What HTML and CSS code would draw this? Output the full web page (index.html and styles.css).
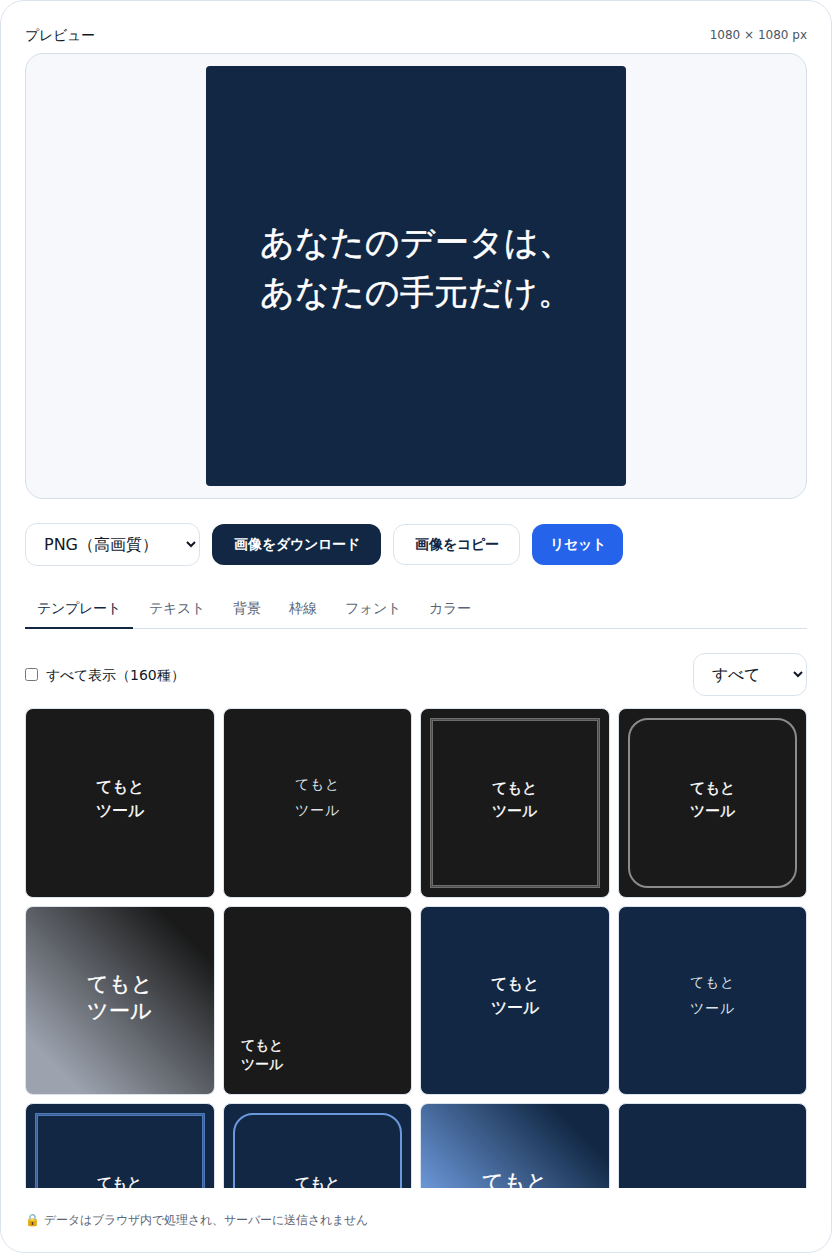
FILE: index.html
```html
<!DOCTYPE html>
<html>
<head>
<meta charset="utf-8">
<title>プレビュー</title>
<link rel="stylesheet" href="styles.css">
</head>
<body>
<main class="card">
  <div class="preview-head">
    <span class="preview-label">プレビュー</span>
    <span class="preview-size">1080 × 1080 px</span>
  </div>
  <div class="preview-box">
    <div class="canvas"><p>あなたのデータは、<br>あなたの手元だけ。</p></div>
  </div>
  <div class="controls">
    <select class="select format"><option>PNG（高画質）</option></select>
    <button class="btn btn-navy">画像をダウンロード</button>
    <button class="btn btn-white">画像をコピー</button>
    <button class="btn btn-blue">リセット</button>
  </div>
  <nav class="tabs">
    <a class="tab active">テンプレート</a>
    <a class="tab">テキスト</a>
    <a class="tab">背景</a>
    <a class="tab">枠線</a>
    <a class="tab">フォント</a>
    <a class="tab">カラー</a>
  </nav>
  <div class="filter">
    <label class="show-all"><input type="checkbox"><span>すべて表示（160種）</span></label>
    <select class="select category"><option>すべて</option></select>
  </div>
  <div class="grid-wrap">
    <div class="grid">
      <div class="tile dark t-bold"><p>てもと<br>ツール</p></div>
      <div class="tile dark t-thin"><p>てもと<br>ツール</p></div>
      <div class="tile dark t-framed double-gray"><p>てもと<br>ツール</p></div>
      <div class="tile dark t-framed round-gray"><p>てもと<br>ツール</p></div>
      <div class="tile grad-gray t-large"><p>てもと<br>ツール</p></div>
      <div class="tile dark t-corner"><p>てもと<br>ツール</p></div>
      <div class="tile navy t-bold"><p>てもと<br>ツール</p></div>
      <div class="tile navy t-thin"><p>てもと<br>ツール</p></div>
      <div class="tile navy t-framed double-blue"><p>てもと<br>ツール</p></div>
      <div class="tile navy t-framed round-blue"><p>てもと<br>ツール</p></div>
      <div class="tile grad-blue t-large"><p>てもと<br>ツール</p></div>
      <div class="tile navy t-corner"><p>てもと<br>ツール</p></div>
    </div>
  </div>
  <footer class="note">🔒 データはブラウザ内で処理され、サーバーに送信されません</footer>
</main>
</body>
</html>
```

FILE: styles.css
```css
* { box-sizing: border-box; }
html, body { margin: 0; height: 100%; }
body {
  background: #ffffff;
  color: #111827;
  font-family: "DejaVu Sans", sans-serif;
  overflow: hidden;
}
.card {
  height: 1253px;
  display: flex;
  flex-direction: column;
  padding: 24px 24px 0;
  background: #fff;
  border: 1px solid #dbe3ee;
  border-radius: 24px;
}
.preview-head {
  display: flex;
  justify-content: space-between;
  align-items: center;
  height: 20px;
  margin-bottom: 8px;
}
.preview-label { font-size: 14px; padding-top: 2px; }
.preview-size { font-size: 12px; color: #4b5563; }
.preview-box {
  height: 446px;
  padding: 12px;
  background: #f6f8fc;
  border: 1px solid #d5deea;
  border-radius: 18px;
  display: flex;
  justify-content: center;
  flex: none;
}
.canvas {
  width: 420px;
  height: 420px;
  background: #112743;
  border-radius: 4px;
  color: #fff;
  display: flex;
  align-items: center;
  padding: 0 0 16px 54px;
}
.canvas p { margin: 0; font-size: 33.6px; line-height: 50.4px; -webkit-text-stroke: 0.5px #fff; }
.controls {
  display: flex;
  align-items: center;
  gap: 12px;
  margin-top: 24px;
}
.select {
  height: 43px;
  padding: 0 14px;
  font-family: inherit;
  font-size: 16px;
  color: #111827;
  background: #fff;
  border: 1px solid #dbe3ee;
  border-radius: 12px;
}
.format { width: 175px; }
.category { width: 114px; }
.btn {
  height: 41px;
  padding: 0 8px;
  font-family: inherit;
  font-size: 14px;
  font-weight: 700;
  border-radius: 12px;
  border: 1px solid transparent;
}
.btn-navy { width: 169px; background: #112743; color: #fff; }
.btn-white { width: 127px; background: #fff; color: #112743; border-color: #dbe3ee; }
.btn-blue { width: 91px; background: #2563eb; color: #fff; }
.tabs {
  display: flex;
  gap: 4px;
  margin-top: 24px;
  border-bottom: 1px solid #d5deea;
}
.tab {
  padding: 8px 12px 9px;
  margin-bottom: -1px;
  font-size: 14px;
  line-height: 20px;
  color: #5b6575;
  border-bottom: 2px solid transparent;
}
.tab.active { color: #112743; border-bottom-color: #112743; }
.filter {
  display: flex;
  justify-content: space-between;
  align-items: center;
  margin-top: 24px;
}
.show-all {
  display: flex;
  align-items: center;
  gap: 8px;
  font-size: 14px;
}
.show-all span { padding-top: 2px; }
.show-all input { width: 13px; height: 13px; margin: 0; }
.grid-wrap {
  flex: 1;
  min-height: 0;
  margin-top: 12px;
  overflow: hidden;
}
.grid {
  display: grid;
  grid-template-columns: repeat(4, 1fr);
  gap: 8px;
}
.tile {
  position: relative;
  aspect-ratio: 1;
  display: flex;
  align-items: center;
  justify-content: center;
  border: 1px solid #dbe3ee;
  border-radius: 8px;
  color: #fff;
  overflow: hidden;
}
.tile p { margin: 0; }
.dark { background: #1a1a1a; }
.navy { background: #112743; }
.grad-gray { background: linear-gradient(45deg, #9ca3af 15%, #1a1a1a 85%); }
.grad-blue { background: linear-gradient(45deg, #7fb0f9 15%, #112743 85%); }
.t-bold { padding-bottom: 8px; }
.t-bold p { font-size: 16px; line-height: 24px; -webkit-text-stroke: 0.35px #fff; }
.t-thin { padding-bottom: 11px; }
.t-thin p { font-size: 14px; line-height: 26px; letter-spacing: 1px; color: #dfe2e6; }
.t-framed { padding-bottom: 6px; }
.t-framed p { font-size: 15.2px; line-height: 23px; -webkit-text-stroke: 0.35px #fff; }
.t-large { padding-bottom: 4px; }
.t-large p { font-size: 20.8px; line-height: 27px; -webkit-text-stroke: 0.35px #fff; }
.t-corner { align-items: flex-end; justify-content: flex-start; padding: 0 0 20px 17px; }
.t-corner p { font-size: 14px; line-height: 19px; -webkit-text-stroke: 0.3px #fff; }
.t-framed::before,
.double-gray::after,
.double-blue::after {
  content: "";
  position: absolute;
  inset: 9px;
}
.double-gray::before { border: 3px solid #4e4e4e; }
.double-gray::after { border: 3px double #6c6c6c; }
.round-gray::before { border: 2px solid #8b8b8b; border-radius: 20px; }
.double-blue::before { border: 3px solid #3a5f98; }
.double-blue::after { border: 3px double #4f7ab8; }
.round-blue::before { border: 2px solid #6b98dc; border-radius: 20px; }
.note {
  flex: none;
  height: 64px;
  display: flex;
  align-items: center;
  font-size: 12px;
  color: #5b6575;
}
```
